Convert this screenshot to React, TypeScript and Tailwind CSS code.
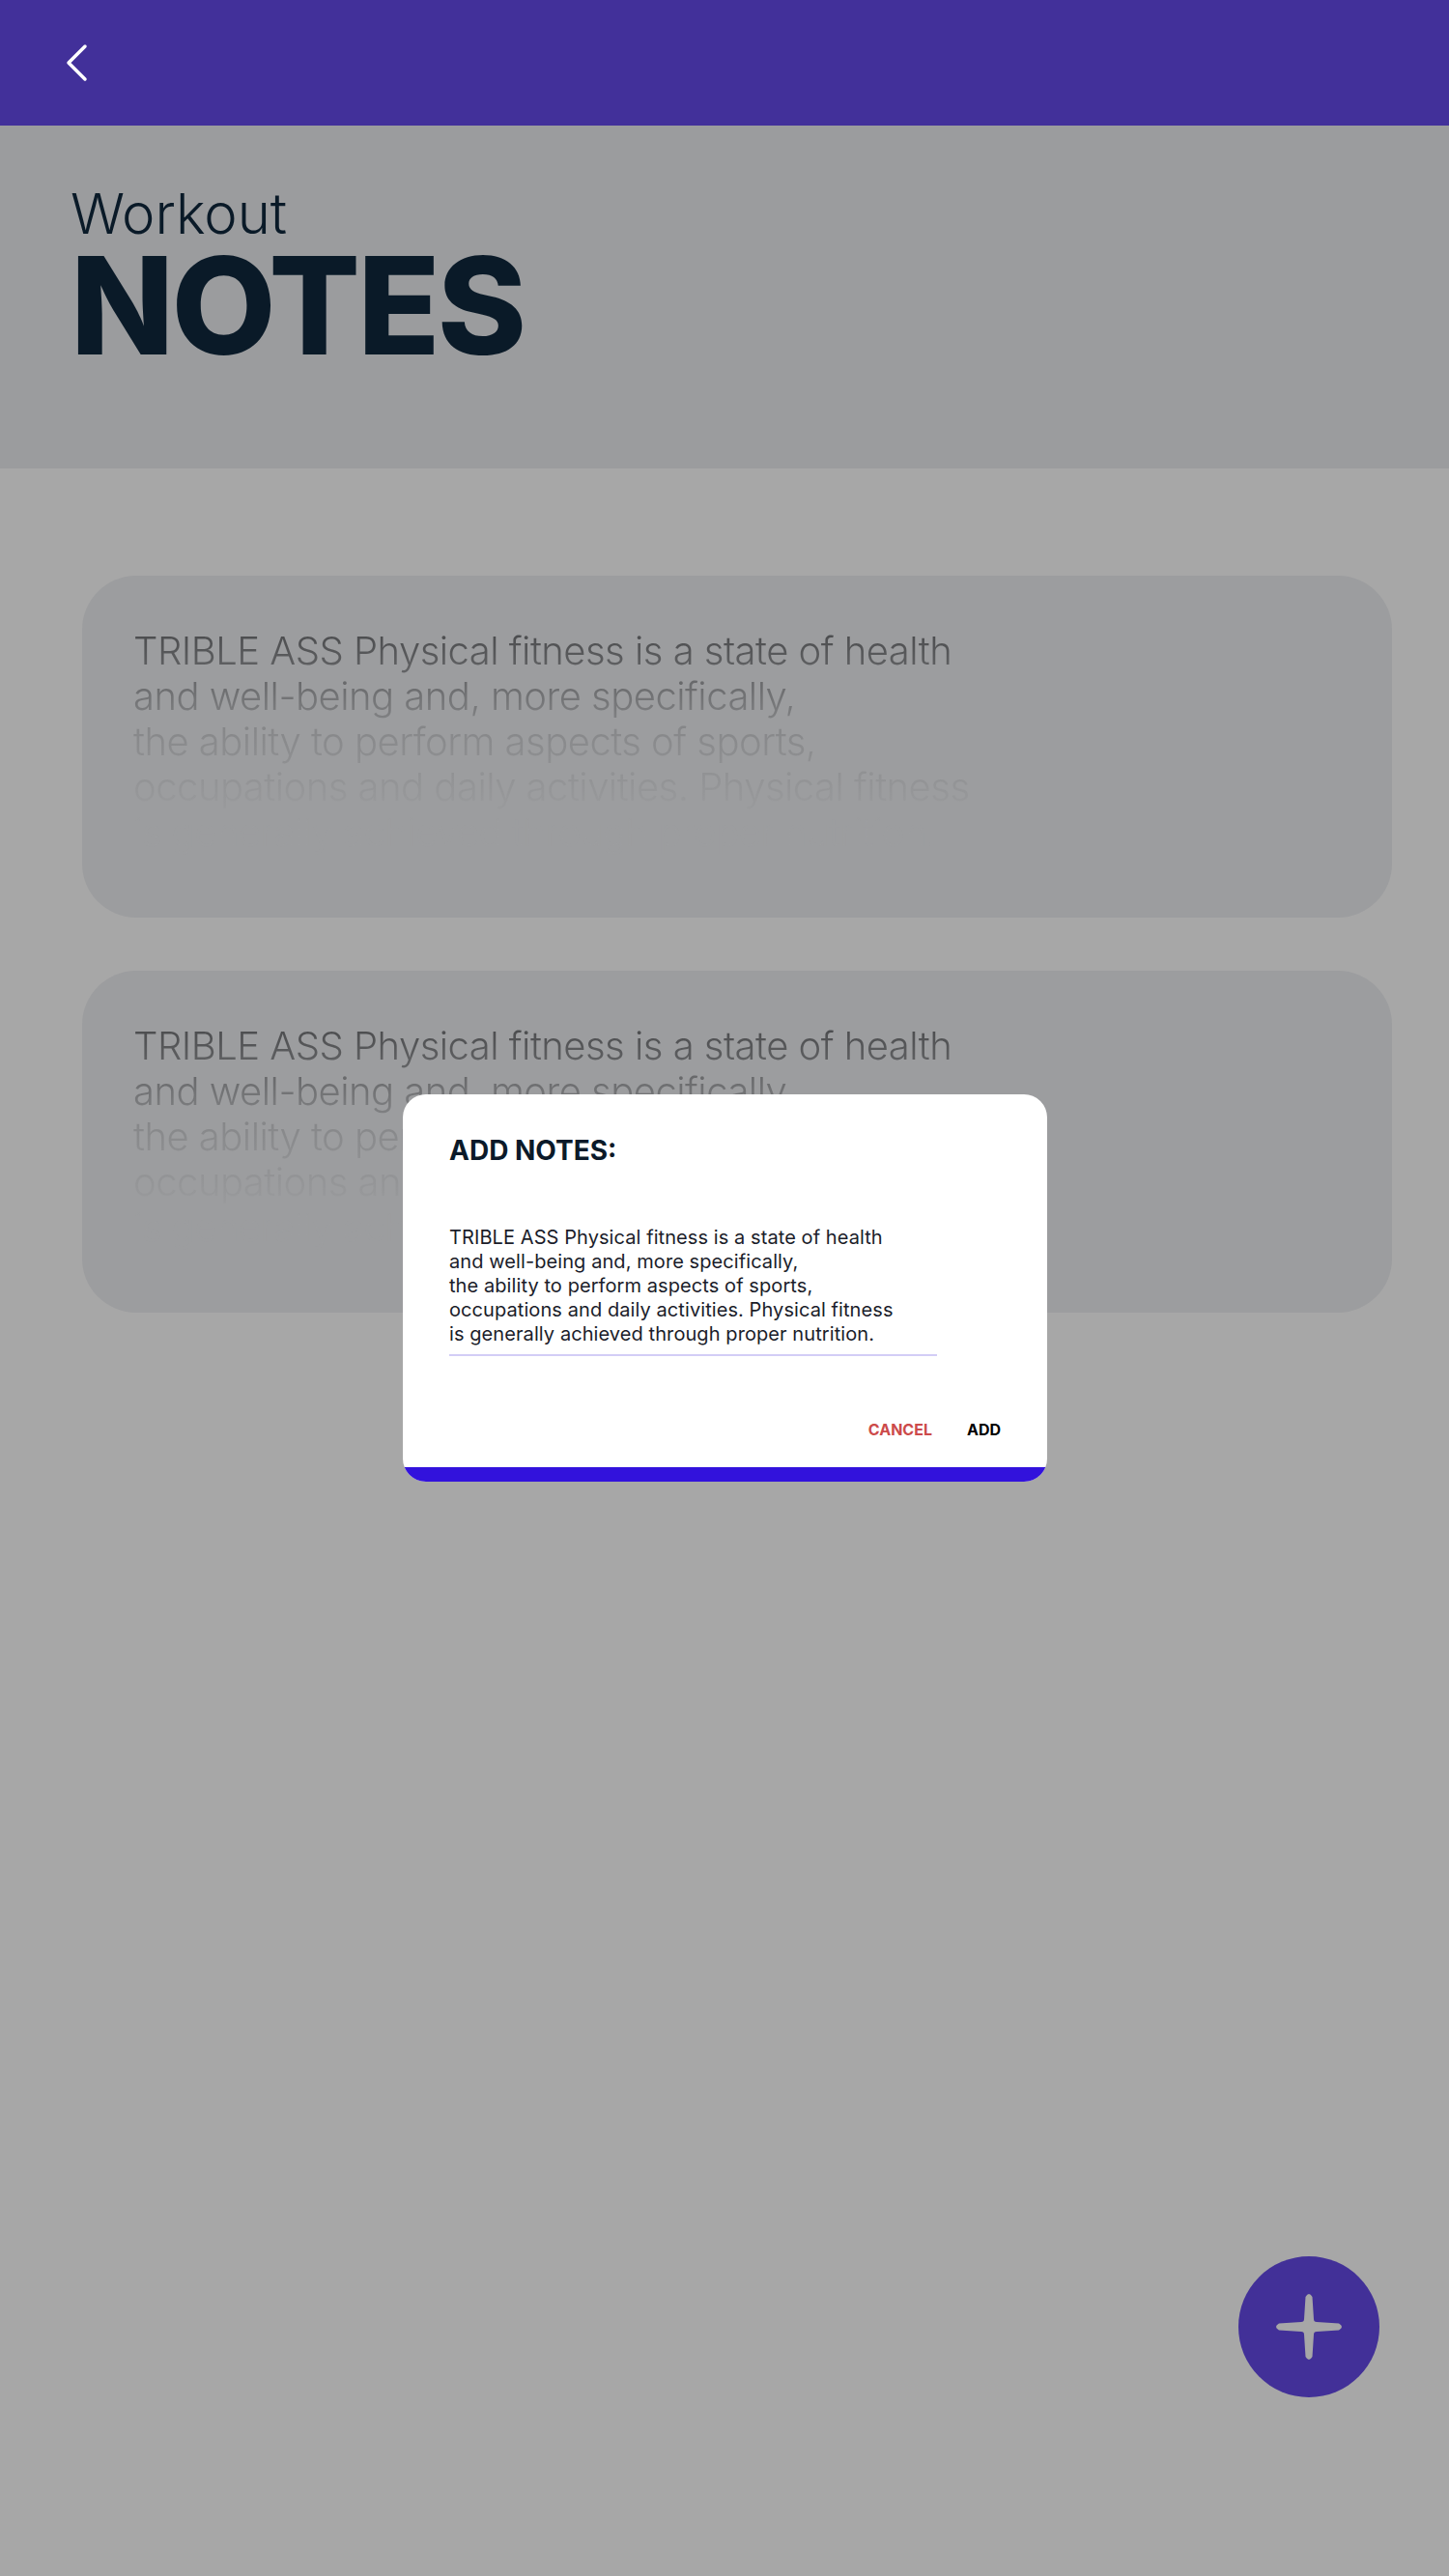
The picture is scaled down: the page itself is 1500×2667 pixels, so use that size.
import { ReactNode } from "react";

const NOTE_LINES = [
    "TRIBLE ASS Physical fitness is a state of health",
    "and well-being and, more specifically,",
    "the ability to perform aspects of sports,",
    "occupations and daily activities. Physical fitness",
    "is generally achieved through proper nutrition.",
];

function Lines({ lines }: { lines: string[] }) {
    return (
        <>
            {lines.map((l, i) => (
                <span key={i} className="block whitespace-nowrap">
                    {l}
                </span>
            ))}
        </>
    );
}

function NoteCard() {
    return (
        <div className="h-[354px] rounded-[56px] bg-[#9c9d9f] pl-[53px] pt-[54px] overflow-hidden">
            <p className="text-[40px] leading-[47px] font-light tracking-[-0.013em] text-transparent bg-clip-text bg-linear-to-b from-[#48494b] via-[#87888a] via-45% to-[#9c9d9f] to-85% inline-block">
                <Lines lines={NOTE_LINES} />
            </p>
        </div>
    );
}

function Fab({ children }: { children?: ReactNode }) {
    return (
        <button className="absolute left-[1282px] top-[2336px] w-[146px] h-[146px] rounded-full bg-[#423098] grid place-items-center">
            {children}
        </button>
    );
}

export default function App() {
    return (
        <div className="relative min-h-[2667px] bg-[#a7a7a7] font-['Inter',sans-serif]">
            {/* top bar */}
            <div className="h-[130px] bg-[#42309a] flex items-center pl-[66px]">
                <svg width="26" height="40" viewBox="0 0 26 40" fill="none">
                    <path d="M22 3 L5 20 L22 37" stroke="white" strokeWidth="3.5" strokeLinecap="round" strokeLinejoin="round" />
                </svg>
            </div>

            {/* title */}
            <div className="h-[355px] bg-[#9b9c9e] pl-[73px] pt-[62px] text-[#0a1a28]">
                <div className="text-[58px] leading-none font-light">Workout</div>
                <div className="text-[140px] leading-none font-extrabold tracking-[-0.02em] mt-[-4px]">NOTES</div>
            </div>

            {/* notes list */}
            <div className="pl-[85px] pr-[59px] pt-[111px] flex flex-col gap-[55px]">
                <NoteCard />
                <NoteCard />
            </div>

            {/* add notes dialog */}
            <div className="absolute left-[417px] top-[1133px] w-[667px] h-[401px] rounded-[24px] bg-white overflow-hidden flex flex-col">
                <div className="flex-1 px-[48px] pt-[40px]">
                    <h2 className="text-[28px] leading-[36px] font-bold text-[#0b1a29]">ADD NOTES:</h2>
                    <div className="mt-[60px] w-[505px] border-b-2 border-[#d3cdf6] pb-[8px]">
                        <p className="text-[20px] leading-[25px] font-normal tracking-[0.004em] text-[#1b1d2a]">
                            <Lines lines={NOTE_LINES} />
                        </p>
                    </div>
                    <div className="mt-[66px] flex justify-end gap-[36px] text-[16px] leading-[20px] font-bold">
                        <span className="text-[#cc4a4a]">CANCEL</span>
                        <span className="text-black">ADD</span>
                    </div>
                </div>
                <div className="h-[15px] bg-[#3212dc]" />
            </div>

            <Fab>
                <svg width="74" height="74" viewBox="-37 -37 74 74">
                    <path
                        d="M -3.5 -31 Q 0 -37 3.5 -31 L 5 -8 Q 5 -5 8 -5 L 31 -3.5 Q 37 0 31 3.5 L 8 5 Q 5 5 5 8 L 3.5 31 Q 0 37 -3.5 31 L -5 8 Q -5 5 -8 5 L -31 3.5 Q -37 0 -31 -3.5 L -8 -5 Q -5 -5 -5 -8 Z"
                        fill="#a7a7a7"
                    />
                </svg>
            </Fab>
        </div>
    );
}
